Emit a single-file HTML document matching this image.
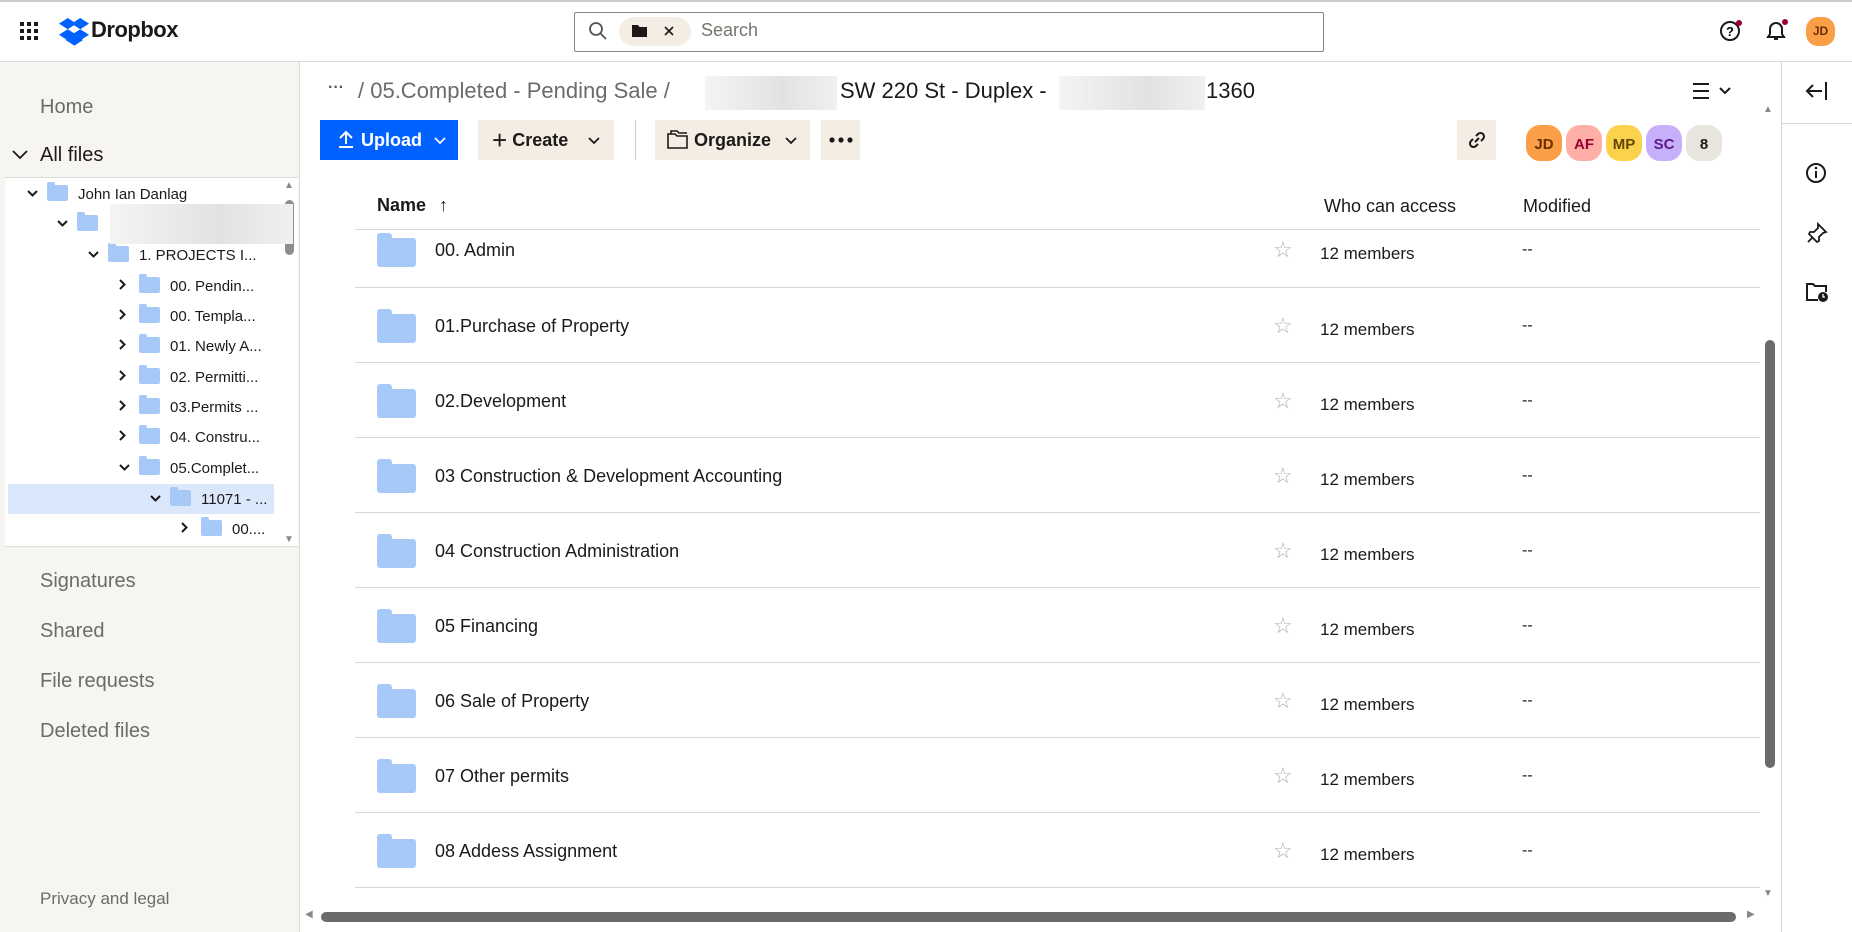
<!DOCTYPE html>
<html><head><meta charset="utf-8"><style>
*{box-sizing:border-box;margin:0;padding:0}
body{width:1852px;height:932px;overflow:hidden;background:#fff;font-family:"Liberation Sans",sans-serif;color:#1e1919;position:relative}
.a{position:absolute}
.top{left:0;top:0;width:1852px;height:62px;border-top:2px solid #ccc;border-bottom:1px solid #dedbd6;background:#fff}
.side{left:0;top:62px;width:300px;height:870px;background:#f7f5f2;border-right:1px solid #dedbd6}
.nav{left:40px;font-size:20px;color:#6b6b6b}
.tree{left:5px;top:177px;width:293px;height:370px;background:#fff;border-top:1px solid #dedbd6;border-bottom:1px solid #dedbd6}
.tr{position:absolute;height:30px;font-size:15px;line-height:30px;color:#1e1919;white-space:nowrap}
.fo{display:inline-block;width:21px;height:16px;background:#a6c9f7;border-radius:2px;vertical-align:-2px;margin-right:10px;position:relative}
.fo:before{content:"";position:absolute;left:0;top:-3px;width:8px;height:4px;background:#a6c9f7;border-radius:2px 2px 0 0}
.chev{display:inline-block;width:20px;vertical-align:1px}
.row{left:355px;width:1405px;height:75px;border-bottom:1px solid #dad7d3}
.fi{position:absolute;left:22px;width:39px;height:29px;background:#a6c9f7;border-radius:3px}
.fi:before{content:"";position:absolute;left:0;top:-5px;width:15px;height:7px;background:#a6c9f7;border-radius:3px 3px 0 0}
.nm{position:absolute;left:80px;font-size:18px;color:#1e1919}
.st{position:absolute;left:918px;font-size:22px;color:#b5b0ab}
.mb{position:absolute;left:965px;font-size:17px}
.dd{position:absolute;left:1167px;font-size:16px}
.btn{top:120px;height:40px;background:#f3ede4;font-size:18px;font-weight:bold;line-height:40px}
.av{top:123px;width:40px;height:40px;border-radius:16px;font-size:15px;font-weight:bold;text-align:center;line-height:40px;border:2px solid #fff}
.blur{background:linear-gradient(90deg,#f4f4f4,#e2e2e2 60%,#f0f0f0)}
</style></head><body>
<div class="a top"></div>
<svg class="a" style="left:20px;top:22px" width="18" height="18"><g fill="#1e1919"><rect x="0" y="0" width="4" height="4"/><rect x="7" y="0" width="4" height="4"/><rect x="14" y="0" width="4" height="4"/><rect x="0" y="7" width="4" height="4"/><rect x="7" y="7" width="4" height="4"/><rect x="14" y="7" width="4" height="4"/><rect x="0" y="14" width="4" height="4"/><rect x="7" y="14" width="4" height="4"/><rect x="14" y="14" width="4" height="4"/></g></svg>
<svg class="a" style="left:59px;top:18px" width="30" height="28" viewBox="0 0 43 40"><g fill="#0061fe"><path d="M12.5 0L0 8l12.5 8L25 8z"/><path d="M30.5 0L18 8l12.5 8L43 8z"/><path d="M0 24l12.5 8L25 24l-12.5-8z"/><path d="M30.5 16L18 24l12.5 8L43 24z"/><path d="M12.5 34.5L25 42.5l12.5-8L25 26.5z" transform="translate(-3 -3)"/></g></svg>
<div class="a" style="left:91px;top:17px;font-size:22px;font-weight:bold;letter-spacing:-0.5px">Dropbox</div>
<div class="a" style="left:574px;top:12px;width:750px;height:40px;border:1px solid #8a8580;border-radius:2px"></div>
<svg class="a" style="left:588px;top:21px" width="20" height="20"><circle cx="8" cy="8" r="6" fill="none" stroke="#555" stroke-width="1.8"/><path d="M12.5 12.5L18 18" stroke="#555" stroke-width="1.8"/></svg>
<div class="a" style="left:619px;top:17px;width:72px;height:29px;background:#f3ede4;border-radius:15px"></div>
<svg class="a" style="left:632px;top:24px" width="15" height="13"><path d="M0 1h6l1.5 2H15v10H0z" fill="#1e1919"/></svg>
<svg class="a" style="left:663px;top:25px" width="12" height="12"><path d="M2 2l8 8M10 2l-8 8" stroke="#1e1919" stroke-width="1.6"/></svg>
<div class="a" style="left:701px;top:20px;font-size:18px;color:#77726d">Search</div>
<svg class="a" style="left:1719px;top:19px" width="24" height="24"><circle cx="11" cy="12" r="9" fill="none" stroke="#1e1919" stroke-width="2"/><text x="11" y="17" font-size="13" font-weight="bold" text-anchor="middle" font-family="Liberation Sans">?</text><circle cx="20" cy="4" r="3" fill="#9b0032"/></svg>
<svg class="a" style="left:1764px;top:18px" width="26" height="26"><path d="M4 19h16l-2-3V11a6 6 0 0 0-12 0v5z M10 21h4" fill="none" stroke="#1e1919" stroke-width="2"/><circle cx="21" cy="4" r="3" fill="#9b0032"/></svg>
<div class="a" style="left:1806px;top:17px;width:29px;height:29px;border-radius:12px;background:#fa9f47;font-size:12px;font-weight:bold;text-align:center;line-height:29px;color:#6b2d00">JD</div>
<div class="a side"></div>
<div class="a nav" style="top:96px">Home</div>
<svg class="a" style="left:12px;top:149px" width="16" height="12"><path d="M1 2l7 7 7-7" fill="none" stroke="#1e1919" stroke-width="1.8"/></svg>
<div class="a" style="left:40px;top:144px;font-size:20px;color:#1e1919">All files</div>
<div class="a tree">
<div class="tr" style="left:22px;top:1px"><span class="chev"><svg width="11" height="8"><path d="M1 1l4.5 4.5L10 1" fill="none" stroke="#1e1919" stroke-width="2"/></svg></span><span class="fo"></span>John Ian Danlag</div>
<div class="tr" style="left:52px;top:31px"><span class="chev"><svg width="11" height="8"><path d="M1 1l4.5 4.5L10 1" fill="none" stroke="#1e1919" stroke-width="2"/></svg></span><span class="fo"></span></div>
<div class="tr" style="left:83px;top:62px"><span class="chev"><svg width="11" height="8"><path d="M1 1l4.5 4.5L10 1" fill="none" stroke="#1e1919" stroke-width="2"/></svg></span><span class="fo"></span>1. PROJECTS I...</div>
<div class="tr" style="left:114px;top:93px"><span class="chev"><svg width="8" height="11"><path d="M1 1l4.5 4.5L1 10" fill="none" stroke="#1e1919" stroke-width="2"/></svg></span><span class="fo"></span>00. Pendin...</div>
<div class="tr" style="left:114px;top:123px"><span class="chev"><svg width="8" height="11"><path d="M1 1l4.5 4.5L1 10" fill="none" stroke="#1e1919" stroke-width="2"/></svg></span><span class="fo"></span>00. Templa...</div>
<div class="tr" style="left:114px;top:153px"><span class="chev"><svg width="8" height="11"><path d="M1 1l4.5 4.5L1 10" fill="none" stroke="#1e1919" stroke-width="2"/></svg></span><span class="fo"></span>01. Newly A...</div>
<div class="tr" style="left:114px;top:184px"><span class="chev"><svg width="8" height="11"><path d="M1 1l4.5 4.5L1 10" fill="none" stroke="#1e1919" stroke-width="2"/></svg></span><span class="fo"></span>02. Permitti...</div>
<div class="tr" style="left:114px;top:214px"><span class="chev"><svg width="8" height="11"><path d="M1 1l4.5 4.5L1 10" fill="none" stroke="#1e1919" stroke-width="2"/></svg></span><span class="fo"></span>03.Permits ...</div>
<div class="tr" style="left:114px;top:244px"><span class="chev"><svg width="8" height="11"><path d="M1 1l4.5 4.5L1 10" fill="none" stroke="#1e1919" stroke-width="2"/></svg></span><span class="fo"></span>04. Constru...</div>
<div class="tr" style="left:114px;top:275px"><span class="chev"><svg width="11" height="8"><path d="M1 1l4.5 4.5L10 1" fill="none" stroke="#1e1919" stroke-width="2"/></svg></span><span class="fo"></span>05.Complet...</div>
<div class="a" style="left:3px;top:306px;width:266px;height:30px;background:#dbe8fc"></div>
<div class="tr" style="left:145px;top:306px"><span class="chev"><svg width="11" height="8"><path d="M1 1l4.5 4.5L10 1" fill="none" stroke="#1e1919" stroke-width="2"/></svg></span><span class="fo"></span>11071 - ...</div>
<div class="tr" style="left:176px;top:336px"><span class="chev"><svg width="8" height="11"><path d="M1 1l4.5 4.5L1 10" fill="none" stroke="#1e1919" stroke-width="2"/></svg></span><span class="fo"></span>00....</div>
<div class="a" style="left:279px;top:2px;font-size:10px;color:#888">▲</div>
<div class="a" style="left:279px;top:356px;font-size:10px;color:#888">▼</div>
<div class="a" style="left:280px;top:22px;width:9px;height:55px;background:#8d8d8d;border-radius:5px"></div>
</div>
<div class="a blur" style="left:110px;top:204px;width:183px;height:40px"></div>
<div class="a nav" style="top:570px">Signatures</div>
<div class="a nav" style="top:620px">Shared</div>
<div class="a nav" style="top:670px">File requests</div>
<div class="a nav" style="top:720px">Deleted files</div>
<div class="a" style="left:40px;top:889px;font-size:17px;color:#6b6b6b">Privacy and legal</div>
<div class="a" style="left:328px;top:79px;font-size:16px;font-weight:bold;color:#555">···</div>
<div class="a" style="left:358px;top:78px;font-size:22px;color:#6b6b6b">/ 05.Completed - Pending Sale /</div>
<div class="a blur" style="left:705px;top:76px;width:132px;height:34px"></div>
<div class="a" style="left:840px;top:78px;font-size:22px;color:#1e1919">SW 220 St - Duplex -</div>
<div class="a blur" style="left:1059px;top:76px;width:146px;height:34px"></div>
<div class="a" style="left:1206px;top:78px;font-size:22px;color:#1e1919">1360</div>
<svg class="a" style="left:1692px;top:82px" width="44" height="18"><path d="M1 2h16M1 9h16M1 16h16" stroke="#1e1919" stroke-width="2"/><path d="M28 6l5 5 5-5" fill="none" stroke="#1e1919" stroke-width="2"/></svg>
<div class="a btn" style="left:320px;width:138px;background:#0061fe;color:#fff;padding-left:16px">
<svg style="vertical-align:-3px" width="20" height="20"><path d="M10 15V3M4 9l6-6 6 6M3 18h14" fill="none" stroke="#fff" stroke-width="2"/></svg> Upload</div>
<svg class="a" style="left:434px;top:136px" width="12" height="10"><path d="M1 2l5 5 5-5" fill="none" stroke="#fff" stroke-width="1.8"/></svg>
<div class="a btn" style="left:478px;width:136px;padding-left:14px"><span style="font-weight:normal;font-size:26px;vertical-align:-3px">+</span> Create</div>
<svg class="a" style="left:588px;top:136px" width="12" height="10"><path d="M1 2l5 5 5-5" fill="none" stroke="#1e1919" stroke-width="1.8"/></svg>
<div class="a" style="left:635px;top:120px;width:1px;height:40px;background:#ccc"></div>
<div class="a btn" style="left:655px;width:155px;padding-left:12px">
<svg style="vertical-align:-3px" width="22" height="20"><path d="M1 5h7l2 2h10v12H1z M4 5V2h6l2 2h8" fill="none" stroke="#1e1919" stroke-width="1.6"/></svg> Organize</div>
<svg class="a" style="left:785px;top:136px" width="12" height="10"><path d="M1 2l5 5 5-5" fill="none" stroke="#1e1919" stroke-width="1.8"/></svg>
<div class="a btn" style="left:821px;width:39px"></div>
<svg class="a" style="left:829px;top:137px" width="24" height="6"><circle cx="3" cy="3" r="2.6" fill="#1e1919"/><circle cx="12" cy="3" r="2.6" fill="#1e1919"/><circle cx="21" cy="3" r="2.6" fill="#1e1919"/></svg>
<div class="a btn" style="left:1457px;width:39px"></div>
<svg class="a" style="left:1466px;top:129px" width="22" height="22"><path d="M9 13l4-4 M7 10l-2 2a3.5 3.5 0 0 0 5 5l2-2 M15 12l2-2a3.5 3.5 0 0 0-5-5l-2 2" fill="none" stroke="#1e1919" stroke-width="2"/></svg>
<div class="a av" style="left:1524px;background:#fa9f47;color:#6b2d00">JD</div>
<div class="a av" style="left:1564px;background:#ffafa5;color:#9b0032">AF</div>
<div class="a av" style="left:1604px;background:#fad24b;color:#684505">MP</div>
<div class="a av" style="left:1644px;background:#c8affa;color:#5b1c8c">SC</div>
<div class="a av" style="left:1684px;background:#e8e4de;color:#1e1919">8</div>
<div class="a" style="left:377px;top:195px;font-size:18px;font-weight:bold">Name <span style="margin-left:8px">↑</span></div>
<div class="a" style="left:1324px;top:196px;font-size:18px">Who can access</div>
<div class="a" style="left:1523px;top:196px;font-size:18px">Modified</div>
<div class="a" style="left:355px;top:229px;width:1405px;height:1px;background:#dad7d3"></div>
<div class="a row" style="top:230px;height:58px"><div class="fi" style="top:8px"></div><div class="nm" style="top:10px">00. Admin</div><div class="st" style="top:7px">☆</div><div class="mb" style="top:14px">12 members</div><div class="dd" style="top:11px">--</div></div>
<div class="a row" style="top:288px"><div class="fi" style="top:26px"></div><div class="nm" style="top:28px">01.Purchase of Property</div><div class="st" style="top:25px">☆</div><div class="mb" style="top:32px">12 members</div><div class="dd" style="top:29px">--</div></div>
<div class="a row" style="top:363px"><div class="fi" style="top:26px"></div><div class="nm" style="top:28px">02.Development</div><div class="st" style="top:25px">☆</div><div class="mb" style="top:32px">12 members</div><div class="dd" style="top:29px">--</div></div>
<div class="a row" style="top:438px"><div class="fi" style="top:26px"></div><div class="nm" style="top:28px">03 Construction &amp; Development Accounting</div><div class="st" style="top:25px">☆</div><div class="mb" style="top:32px">12 members</div><div class="dd" style="top:29px">--</div></div>
<div class="a row" style="top:513px"><div class="fi" style="top:26px"></div><div class="nm" style="top:28px">04 Construction Administration</div><div class="st" style="top:25px">☆</div><div class="mb" style="top:32px">12 members</div><div class="dd" style="top:29px">--</div></div>
<div class="a row" style="top:588px"><div class="fi" style="top:26px"></div><div class="nm" style="top:28px">05 Financing</div><div class="st" style="top:25px">☆</div><div class="mb" style="top:32px">12 members</div><div class="dd" style="top:29px">--</div></div>
<div class="a row" style="top:663px"><div class="fi" style="top:26px"></div><div class="nm" style="top:28px">06 Sale of Property</div><div class="st" style="top:25px">☆</div><div class="mb" style="top:32px">12 members</div><div class="dd" style="top:29px">--</div></div>
<div class="a row" style="top:738px"><div class="fi" style="top:26px"></div><div class="nm" style="top:28px">07 Other permits</div><div class="st" style="top:25px">☆</div><div class="mb" style="top:32px">12 members</div><div class="dd" style="top:29px">--</div></div>
<div class="a row" style="top:813px"><div class="fi" style="top:26px"></div><div class="nm" style="top:28px">08 Addess Assignment</div><div class="st" style="top:25px">☆</div><div class="mb" style="top:32px">12 members</div><div class="dd" style="top:29px">--</div></div>
<div class="a" style="left:1760px;top:100px;width:18px;height:805px;background:#fff"></div>
<div class="a" style="left:1763px;top:104px;font-size:10px;color:#888">▲</div>
<div class="a" style="left:1763px;top:888px;font-size:10px;color:#888">▼</div>
<div class="a" style="left:1765px;top:340px;width:10px;height:428px;background:#6b6b6b;border-radius:5px"></div>
<div class="a" style="left:300px;top:906px;width:1460px;height:22px;background:#fff"></div>
<div class="a" style="left:305px;top:909px;font-size:10px;color:#888">◀</div>
<div class="a" style="left:1747px;top:909px;font-size:10px;color:#888">▶</div>
<div class="a" style="left:321px;top:912px;width:1415px;height:10px;background:#6b6b6b;border-radius:5px"></div>
<div class="a" style="left:1781px;top:62px;width:1px;height:870px;background:#dad7d3"></div>
<div class="a" style="left:1781px;top:123px;width:71px;height:1px;background:#dad7d3"></div>
<svg class="a" style="left:1805px;top:80px" width="24" height="22"><path d="M2 11h15M8 5l-6 6 6 6M21 2v18" fill="none" stroke="#1e1919" stroke-width="2"/></svg>
<svg class="a" style="left:1805px;top:162px" width="22" height="22"><circle cx="11" cy="11" r="9" fill="none" stroke="#1e1919" stroke-width="2"/><path d="M11 9v7" stroke="#1e1919" stroke-width="2"/><circle cx="11" cy="6" r="1.3" fill="#1e1919"/></svg>
<svg class="a" style="left:1806px;top:222px" width="22" height="22"><path d="M12 2l8 8-3 1-4 4v4l-2 1-8-8 1-2h4l4-4z M6 16l-4 4" fill="none" stroke="#1e1919" stroke-width="1.8"/></svg>
<svg class="a" style="left:1805px;top:281px" width="24" height="22"><path d="M13 19H2V3h6l2 2h11v6" fill="none" stroke="#1e1919" stroke-width="2"/><circle cx="18" cy="16" r="5" fill="#1e1919"/><path d="M18 13v3h2" stroke="#fff" stroke-width="1.3" fill="none"/></svg>
</body></html>
